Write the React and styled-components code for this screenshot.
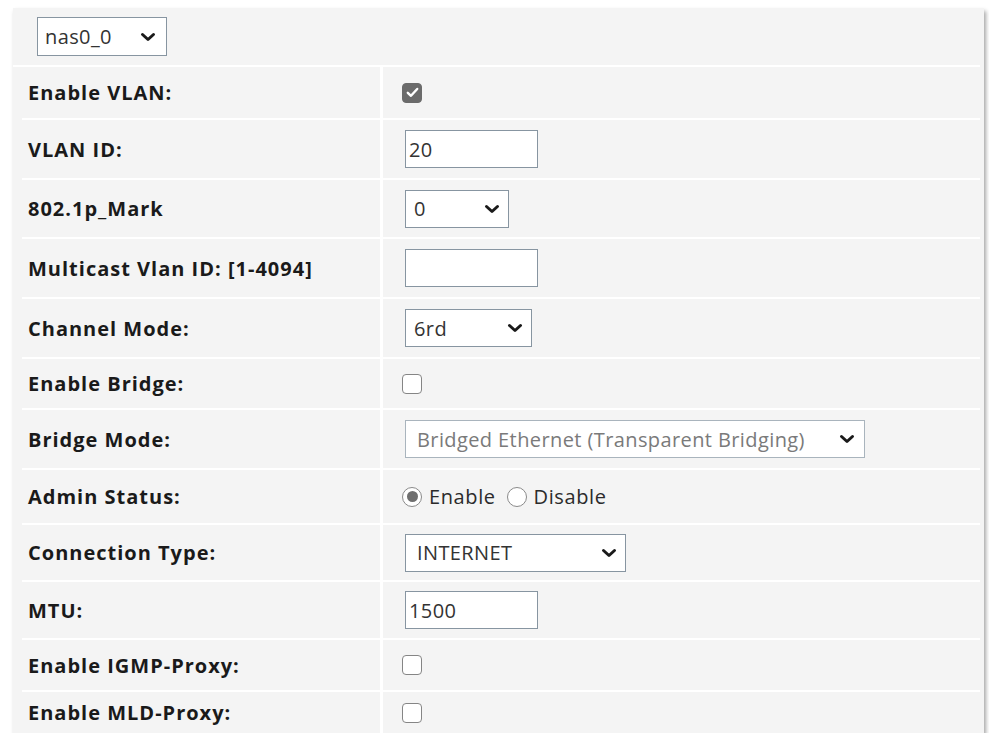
import React from 'react';
import styled, { createGlobalStyle } from 'styled-components';

const GlobalStyle = createGlobalStyle`
  body {
    margin: 0;
    background: #ffffff;
    font-family: "Open Sans", "Noto Sans", sans-serif;
  }
`;

const Panel = styled.div`
  margin: 8px 0 0 13px;
  width: 971px;
  background: #f4f4f4;
  box-shadow: 2px 3px 4px rgba(0, 0, 0, 0.35);
  padding: 0 4px 0 9px;
  box-sizing: border-box;
`;

const TopBar = styled.div`
  height: 57px;
  display: flex;
  align-items: center;
  border-bottom: 2px solid #ffffff;
  margin-left: -9px;
  padding-left: 24px;
`;

const Table = styled.div`
  display: grid;
  grid-template-columns: 358px 1fr;
  column-gap: 3px;
  row-gap: 2px;
  background: #ffffff;
`;

const LabelCell = styled.div`
  height: ${({ h }) => h}px;
  background: #f4f4f4;
  display: flex;
  align-items: center;
  padding-left: 6px;
  font-weight: 700;
  font-size: 20px;
  letter-spacing: 1px;
  color: #1a1a1a;
`;

const FieldCell = styled.div`
  height: ${({ h }) => h}px;
  background: #f4f4f4;
  display: flex;
  align-items: center;
  padding-left: 22px;
`;

const TextInput = styled.input`
  width: 133px;
  height: 38px;
  box-sizing: border-box;
  border: 1px solid #8795a1;
  background: #ffffff;
  padding: 0 3px;
  font-family: inherit;
  font-size: 20px;
  letter-spacing: 0.4px;
  color: #333333;
  outline: none;
`;

const SelectWrap = styled.div`
  position: relative;
  width: ${({ w }) => w}px;
  height: ${({ ht }) => ht || 38}px;
`;

const Select = styled.select`
  appearance: none;
  width: 100%;
  height: 100%;
  box-sizing: border-box;
  border: 1px solid ${({ disabled }) => (disabled ? '#a9b4bd' : '#8795a1')};
  background: #ffffff;
  padding: 0 0 0 ${({ pad }) => pad || 8}px;
  font-family: inherit;
  font-size: 20px;
  letter-spacing: 0.4px;
  color: ${({ disabled }) => (disabled ? '#7a7a7a' : '#333333')};
  outline: none;
  opacity: 1;
`;

const Chevron = styled.svg`
  position: absolute;
  right: ${({ r }) => r || 9}px;
  top: 50%;
  margin-top: -5px;
  pointer-events: none;
`;

const Box = styled.span`
  display: inline-flex;
  align-items: center;
  justify-content: center;
  width: 20px;
  height: 20px;
  box-sizing: border-box;
  border-radius: 4px;
  border: 1.5px solid ${({ checked }) => (checked ? '#6b6b6b' : '#858585')};
  background: ${({ checked }) => (checked ? '#6b6b6b' : '#ffffff')};
  margin-left: -3px;
`;

const RadioGroup = styled.div`
  display: flex;
  align-items: center;
  margin-left: -3px;
  font-size: 20px;
  letter-spacing: 0.6px;
  color: #2b2b2b;
`;

const Radio = styled.span`
  display: inline-flex;
  align-items: center;
  justify-content: center;
  width: 20px;
  height: 20px;
  box-sizing: border-box;
  border-radius: 50%;
  border: 1px solid #8a8a8a;
  background: #ffffff;
  margin-right: 7px;
  &::after {
    content: '';
    width: 11px;
    height: 11px;
    border-radius: 50%;
    background: ${({ on }) => (on ? '#6f6f6f' : 'transparent')};
  }
`;

const RadioLabel = styled.span`
  margin-right: 11px;
`;

const Arrow = ({ r }) => (
  <Chevron r={r} width="16" height="10" viewBox="0 0 16 10">
    <path d="M2.5 2.5 L8 7.5 L13.5 2.5" fill="none" stroke="#1a1a1a" strokeWidth="3" strokeLinecap="round" strokeLinejoin="round" />
  </Chevron>
);

const Dropdown = ({ w, value, disabled, ht, pad, r }) => (
  <SelectWrap w={w} ht={ht}>
    <Select disabled={disabled} pad={pad} defaultValue={value}>
      <option value={value}>{value}</option>
    </Select>
    <Arrow r={r} />
  </SelectWrap>
);

const Check = ({ checked }) => (
  <Box checked={checked}>
    {checked && (
      <svg width="13" height="11" viewBox="0 0 13 11">
        <path d="M1.8 5.8 L5 8.8 L11.2 2" fill="none" stroke="#ffffff" strokeWidth="2.4" strokeLinecap="round" strokeLinejoin="round" />
      </svg>
    )}
  </Box>
);

const rows = [
  { label: 'Enable VLAN:', h: 51, type: 'check', checked: true },
  { label: 'VLAN ID:', h: 58, type: 'text', value: '20' },
  { label: '802.1p_Mark', h: 57, type: 'select', value: '0', w: 104 },
  { label: 'Multicast Vlan ID: [1-4094]', h: 58, type: 'text', value: '' },
  { label: 'Channel Mode:', h: 58, type: 'select', value: '6rd', w: 127 },
  { label: 'Enable Bridge:', h: 49, type: 'check' },
  { label: 'Bridge Mode:', h: 58, type: 'select', value: 'Bridged Ethernet (Transparent Bridging)', w: 460, disabled: true, pad: 11, r: 10 },
  { label: 'Admin Status:', h: 53, type: 'radio' },
  { label: 'Connection Type:', h: 55, type: 'select', value: 'INTERNET', w: 221, pad: 11 },
  { label: 'MTU:', h: 56, type: 'text', value: '1500' },
  { label: 'Enable IGMP-Proxy:', h: 50, type: 'check' },
  { label: 'Enable MLD-Proxy:', h: 41, type: 'check' },
];

const Field = ({ row }) => {
  if (row.type === 'check') return <Check checked={row.checked} />;
  if (row.type === 'text') return <TextInput defaultValue={row.value} />;
  if (row.type === 'select')
    return <Dropdown w={row.w} value={row.value} disabled={row.disabled} pad={row.pad} r={row.r} />;
  return (
    <RadioGroup>
      <Radio on />
      <RadioLabel>Enable</RadioLabel>
      <Radio />
      <span>Disable</span>
    </RadioGroup>
  );
};

export default function App() {
  return (
    <>
      <GlobalStyle />
      <Panel>
        <TopBar>
          <Dropdown w={130} ht={39} value="nas0_0" pad={7} r={11} />
        </TopBar>
        <Table>
          {rows.map((row) => (
            <React.Fragment key={row.label}>
              <LabelCell h={row.h}>{row.label}</LabelCell>
              <FieldCell h={row.h}>
                <Field row={row} />
              </FieldCell>
            </React.Fragment>
          ))}
        </Table>
      </Panel>
    </>
  );
}
